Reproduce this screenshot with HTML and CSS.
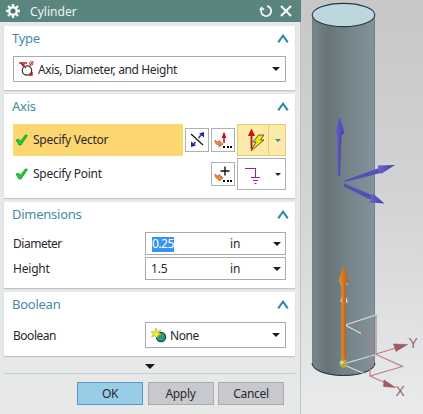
FILE: index.html
```html
<!DOCTYPE html>
<html lang="en">
<head>
<meta charset="utf-8">
<title>Cylinder</title>
<link rel="stylesheet" href="styles.css">
</head>
<body>
<main class="app">
  <section class="dialog">
    <header class="titlebar">
      <svg class="gear" width="14" height="14" viewBox="0 0 14 14"><g stroke="#f2f8f6" stroke-width="2.4"><path d="M7 0v14M0 7h14M2 2l10 10M12 2L2 12"/></g><circle cx="7" cy="7" r="3.800" fill="#5a857e" stroke="#f2f8f6" stroke-width="2.400"/><circle cx="7" cy="7" r="1.800" fill="#47716a"/></svg>
      <h1>Cylinder</h1>
      <svg class="reset" width="14" height="14" viewBox="0 0 14 14" fill="none" stroke="#f2f8f6" stroke-width="1.8"><path d="M8 2.1A5 5 0 1 1 2.6 5"/><path d="M.8 6.4L2.4 3.6L5.1 5.6" stroke-width="1.4"/></svg>
      <svg class="close" width="12" height="12" viewBox="0 0 12 12" stroke="#fff" stroke-width="2"><path d="M1 1l10 10M11 1L1 11"/></svg>
    </header>
    <section class="card type">
      <div class="heading"><h2>Type</h2><svg class="chev" width="12" height="9" viewBox="0 0 12 9"><path d="M1.2 8.3L6 1.6l4.8 6.7"/></svg></div>
      <div class="combo wide">
        <svg class="type-icon" width="15" height="17" viewBox="0 0 15 17"><circle cx="8" cy="9.5" r="4.7" fill="none" stroke="#333" stroke-width="1.2"/><path d="M0 2h8M2 2l5 5" stroke="#b3202c" stroke-width="1.3"/><path d="M2 3h4L4 6z" fill="#b3202c"/><path d="M14.500 0l-4 5" stroke="#b3202c"/><circle cx="12.300" cy="2.500" r="1.700" fill="none" stroke="#b3202c"/><path d="M11 12l2 2.500M10 14h3v-3" fill="none" stroke="#b3202c" stroke-width="1.500"/></svg>
        <span class="type-label">Axis, Diameter, and Height</span><i class="arrow"></i>
      </div>
    </section>
    <section class="card axis">
      <div class="heading"><h2>Axis</h2><svg class="chev" width="12" height="9" viewBox="0 0 12 9"><path d="M1.2 8.3L6 1.6l4.8 6.7"/></svg></div>
      <div class="pick">
        <div class="pick-label active"><svg class="check" width="13" height="12" viewBox="0 0 13 12"><path d="M1 6l3-.7 1.5 2L10.5.8l2 .6L6 11H4z" fill="#22c83c" stroke="#159a2a" stroke-width=".8"/></svg><span class="vector-label">Specify Vector</span></div>
        <button class="tool" aria-label="Reverse"><svg width="22" height="22" viewBox="0 0 22 22"><path d="M5 5l12 11" stroke="#111" stroke-width="1.2"/><path d="M7 16l8-10" stroke="#1d2fb4" stroke-width="1.5" stroke-dasharray="4 4.8"/><path d="M18 3v5.5L13 4.5zM5 18v-5.5l5 4z" fill="#1726b5"/></svg></button>
        <button class="tool" aria-label="Vector dialog"><svg width="22" height="22" viewBox="0 0 22 22"><path d="M12 4v10" stroke="#b00c15" stroke-width="1.5"/><path d="M12 3l2.500 6h-5z" fill="#c51320"/><path d="M3 11c0 4 2 5 4 5v2l4-3-4-3.500V13c-2 0-3-1-4-2z" fill="#f08a36" stroke="#a95225" stroke-width=".7"/><path d="M11 17h2v2h-2zM15 17h2v2h-2zM18 17h2v2h-2z"/></svg></button>
        <button class="split lit" aria-label="Inferred vector"><svg class="split-icon" width="30" height="30" viewBox="0 0 30 30"><path d="M13.500 8v16" stroke="#ac151b" stroke-width="1.800"/><path d="M13.500 3.500l3.500 7.500h-7z" fill="#c4131b"/><path d="M20.500 10h5.500l-3.500 5H26L13 26l5-9h-3z" fill="#eee51d" stroke="#454014" stroke-width=".8"/></svg><i class="divider"></i><i class="small-arrow"></i></button>
      </div>
      <div class="pick">
        <div class="pick-label"><svg class="check" width="13" height="12" viewBox="0 0 13 12"><path d="M1 6l3-.7 1.5 2L10.5.8l2 .6L6 11H4z" fill="#22c83c" stroke="#159a2a" stroke-width=".8"/></svg><span class="point-label">Specify Point</span></div>
        <button class="tool" aria-label="Point dialog"><svg width="22" height="22" viewBox="0 0 22 22"><path d="M13 3.500v9M8.500 8h9" stroke="#111" stroke-width="1.400"/><path d="M3 11c0 4 2 5 4 5v2l4-3-4-3.500V13c-2 0-3-1-4-2z" fill="#f08a36" stroke="#a95225" stroke-width=".7"/><path d="M11 17h2v2h-2zM15 17h2v2h-2zM18 17h2v2h-2z"/></svg></button>
        <button class="split" aria-label="Inferred point"><svg class="split-icon" width="30" height="30" viewBox="0 0 30 30"><path d="M7 9.500h10.500v9M13 18.500h9M15 21.500h5M16.500 24.500h2" fill="none" stroke="#9125a0" stroke-width="1.100"/></svg><i class="divider"></i><i class="small-arrow"></i></button>
      </div>
    </section>
    <section class="card dimensions">
      <div class="heading"><h2>Dimensions</h2><svg class="chev" width="12" height="9" viewBox="0 0 12 9"><path d="M1.2 8.3L6 1.6l4.8 6.7"/></svg></div>
      <div class="field"><span class="diameter-label">Diameter</span><div class="combo number"><span class="value"><mark>0.25</mark></span><span>in</span><i class="arrow"></i></div></div>
      <div class="field"><span class="height-label">Height</span><div class="combo number"><span class="value">1.5</span><span>in</span><i class="arrow"></i></div></div>
    </section>
    <section class="card boolean">
      <div class="heading"><h2>Boolean</h2><svg class="chev" width="12" height="9" viewBox="0 0 12 9"><path d="M1.2 8.3L6 1.6l4.8 6.7"/></svg></div>
      <div class="field"><span class="boolean-label">Boolean</span><div class="combo option"><svg width="16" height="15" viewBox="0 0 16 15"><circle cx="10" cy="9" r="4.6" fill="#279b86" stroke="#174e46" stroke-width="1.3"/><path d="M5 0l1 3.500L10 2 7.800 5l3 2-3.500.300L6 10 4 7.500.500 9l1.800-3L0 3.500 3.700 4z" fill="#f0ed31" stroke="#91952a" stroke-width=".5"/></svg><span class="none">None</span><i class="arrow"></i></div></div>
    </section>
    <div class="more"><i></i></div>
    <footer class="actions"><button class="primary">OK</button><button>Apply</button><button>Cancel</button></footer>
  </section>
  <section class="viewport">
    <svg width="122" height="414" viewBox="301 0 122 414">
      <defs>
        <linearGradient id="steel"><stop offset="0" stop-color="#79878a"/><stop offset=".25" stop-color="#667478"/><stop offset=".5" stop-color="#728186"/><stop offset="1" stop-color="#82939b"/></linearGradient>
        <linearGradient id="violet"><stop stop-color="#6964ce"/><stop offset="1" stop-color="#4640a2"/></linearGradient>
        <linearGradient id="orange"><stop stop-color="#f08b27"/><stop offset="1" stop-color="#b65e12"/></linearGradient>
      </defs>
      <path d="M312 15v349a31.500 12 0 0 0 63 0V15z" fill="url(#steel)"/>
      <path d="M312.500 15v349M374.500 15v349" stroke="#718188"/>
      <path d="M312 363a31.500 12.500 0 0 0 63 0" fill="none" stroke="#263238"/>
      <ellipse cx="343.500" cy="15" rx="31.300" ry="11.600" fill="#bdd7de" stroke="#263740" stroke-width="1.100"/>
      <path d="M336.500 134h5l-1.500 42h-2z" fill="url(#violet)"/><path d="M339.500 116.500l5 17q-5 3-9.500 0z" fill="url(#violet)"/>
      <path d="M344.500 180.500L379 168l1.500 5-36 9z" fill="#554eb5"/><path d="M378 165.500l17-.5-14 9-3-3.500z" fill="url(#violet)"/>
      <path d="M344 183.500l28 11.500-2 4.500-26-13z" fill="#554eb5"/><path d="M373 193.500l11.500 10-15-1 1.500-5z" fill="url(#violet)"/>
      <path d="M343 364l33-9.500M344 365l26 11M345 325l31-10M345 325l16 8.500" fill="none" stroke="#dce1de" stroke-width="1.100"/>
      <path d="M376 315v39.500l26.500 12-32.500 9.500V338q0-3-8-4M376 354l20-6M370 376l16 7" fill="none" stroke="#b77b80" stroke-width="1.100"/>
      <path d="M393.500 344l14 .5-11.500 7zM384 380l11.500 7.500-12-1z" fill="#a35961" stroke="#955158" stroke-width=".5"/>
      <path d="M340.500 284h7M341 301l1-3h4l1 4z" fill="none" stroke="#e1e4d8" stroke-width="1.200"/>
      <path d="M341.500 280h4.500v84h-4.500z" fill="url(#orange)"/><path d="M343.500 265l5 17q-5 2.500-10 0z" fill="url(#orange)"/>
      <circle cx="343.500" cy="363.500" r="4.200" fill="#b6a751"/><circle cx="342" cy="362.500" r="1.700" fill="#e0d88e"/>
      <text class="axis-name" x="408.500" y="348">Y</text><text class="axis-name" x="395.500" y="396">X</text>
    </svg>
  </section>
</main>
</body>
</html>
```
FILE: styles.css
```css
* { box-sizing: border-box; }
body { margin: 0; font: 12px "Noto Sans", "Open Sans", sans-serif; color: #292830; }
h1, h2 { margin: 0; font-weight: 400; }
svg { display: block; flex: none; }
span, h1, h2 { white-space: nowrap; }
button { margin: 0; padding: 0; border: 1px solid #aeb0b4; border-radius: 0; font: inherit; color: inherit; }
.app { display: flex; width: 423px; height: 414px; overflow: hidden; }
.dialog { width: 301px; height: 414px; flex: none; background: #e7e8e8; border-right: 1px solid #bfc3c3; }
.titlebar { display: flex; align-items: center; width: 301px; height: 22px; padding-left: 6px; background: #5a857e; color: #edf5f3; }
.titlebar h1 { width: 50px; margin-left: 10px; font-size: 12px; letter-spacing: .05px; }
.reset { margin-left: 179px; }
.close { margin-left: 7px; }
.card { width: 291px; margin: 0 0 4px 4px; padding: 0 9px; background: #fff; box-shadow: 0 1px 1px #c2c4c5; }
.type { height: 64px; margin-top: 4px; }
.axis { height: 104px; }
.dimensions { height: 86px; }
.boolean { height: 64px; }
.heading { display: flex; align-items: center; justify-content: space-between; height: 30px; padding: 0 0 6px; margin: 0 -3px 0 -1px; }
.heading h2 { font-size: 13px; line-height: 20px; color: #4589a5; letter-spacing: -.25px; }
.chev { fill: none; stroke: #3482ae; stroke-width: 2; }
.combo { display: flex; align-items: center; border: 1px solid #aaaab0; background: #fff; }
.wide { width: 273px; height: 26px; padding: 0 5px; }
.wide > span { margin-left: 4px; }
.type-label { letter-spacing: -.38px; }
.arrow { width: 0; height: 0; margin-left: auto; border: solid transparent; border-width: 4px 4px 0; border-top-color: #1d1d21; }
.pick { display: flex; align-items: center; gap: 2px; height: 32px; margin-bottom: 2px; }
.pick-label { display: flex; align-items: center; width: 170px; height: 32px; padding-left: 2px; }
.pick:last-child .pick-label { width: 196px; }
.active { background: #fcd66f; }
.pick-label span { margin-left: 5px; padding-bottom: 1px; letter-spacing: -.27px; }
.tool { width: 24px; height: 24px; background: #fff; }
.split { display: flex; align-items: center; width: 49px; height: 32px; background: #fff; }
.split-icon { width: 30px; }
.divider { width: 1px; height: 30px; }
.small-arrow { margin-left: 6px; border: solid transparent; border-width: 3px 3px 0; border-top-color: #222; }
.lit { background: #fae9a9; border-color: #e6cd70; }
.lit .divider { background: #e6cd70; }
.lit .small-arrow { border-top-color: #3988aa; }
.field { display: flex; align-items: center; justify-content: space-between; letter-spacing: -.2px; }
.diameter-label, .boolean-label { letter-spacing: -.48px; }
.dimensions .field { height: 23px; margin-bottom: 2px; }
.number { width: 141px; height: 23px; padding: 0 4px 0 5px; }
.value { width: 79px; }
.value mark { display: inline-block; height: 15px; margin-left: 1px; line-height: 14px; background: #3595ef; color: #fff; letter-spacing: -.5px; }
.option { width: 141px; height: 26px; padding: 0 5px; }
.none { margin-left: 3px; letter-spacing: -.4px; }
.more { display: flex; justify-content: center; width: 291px; height: 14px; margin-left: 4px; padding-top: 4px; border-bottom: 1px solid #c7cccc; }
.more i { width: 0; height: 0; border: solid transparent; border-width: 5px 5px 0; border-top-color: #191919; }
.actions { display: flex; gap: 4.500px; padding: 8px 0 0 77px; }
.actions button { width: 66px; height: 23px; background: #c8c9ce; border-color: #aaacb2; letter-spacing: -.3px; }
.actions .primary { background: #99cce6; border-color: #559bc7; }
.viewport { width: 122px; background: linear-gradient(#c7c7c8, #d3d4d5 50%, #eaebec); }
.axis-name { font: 14px "Liberation Sans", sans-serif; fill: #95676b; }
```
